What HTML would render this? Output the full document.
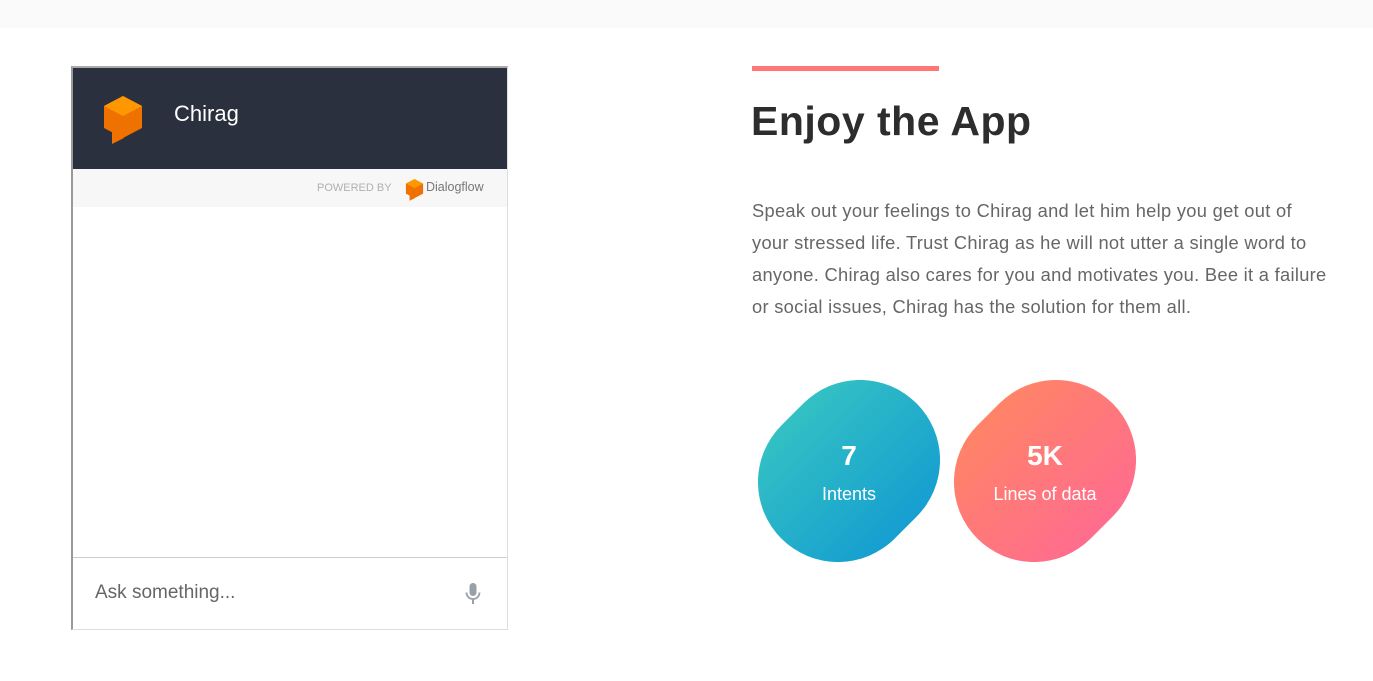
<!DOCTYPE html>
<html><head><style>
body{margin:0;width:1373px;height:681px;background:#fff;font-family:"Liberation Sans",sans-serif;position:relative;overflow:hidden}
.top{position:absolute;left:0;top:0;width:1373px;height:28px;background:#fafafa}
.chat{position:absolute;left:71px;top:66px;width:434px;height:561px;border:1px solid #ddd;border-left:2px solid #999;border-top:2px solid #aaa;background:#fff}
.hdr{position:absolute;left:0;top:0;width:434px;height:101px;background:#2b303e}
.hdr .name{position:absolute;left:101px;top:33px;color:#fff;font-size:22px}
.pw{position:absolute;left:0;top:101px;width:434px;height:38px;background:#f7f7f7}
.pw .t{position:absolute;left:244px;top:13px;font-size:11px;color:#b0b0b0}
.pw .d{position:absolute;left:353px;top:11px;font-size:12.5px;color:#777}
.inp{position:absolute;left:0;top:489px;width:434px;height:72px;border-top:1px solid #ccc}
.inp .t{position:absolute;left:22px;top:24px;font-size:19px;color:#666}
.bar{position:absolute;left:752px;top:66px;width:187px;height:5px;background:#ff7675}
h1{position:absolute;left:751px;top:98px;margin:0;font-size:41px;font-weight:bold;color:#2d2d2d;letter-spacing:0.5px}
p{position:absolute;left:752px;top:195px;margin:0;font-size:18.3px;line-height:32px;color:#666;letter-spacing:0.3px;white-space:nowrap}
</style></head><body>
<div class="top"></div>
<div class="chat">
 <div class="hdr">
  <svg style="position:absolute;left:29px;top:26px" width="42" height="50" viewBox="0 0 42 50">
   <polygon points="21,2 40,12 40,34 21,44 2,34 2,12" fill="#ef7100"/>
   <polygon points="21,2 40,12 21,22 2,12" fill="#ff9800"/>
   <polygon points="10,38 22,44 10,50" fill="#ef7100"/>
  </svg>
  <div class="name">Chirag</div>
 </div>
 <div class="pw"><span class="t">POWERED BY</span>
  <svg style="position:absolute;left:332px;top:9px" width="19" height="23" viewBox="0 0 42 50">
   <polygon points="21,2 40,12 40,34 21,44 2,34 2,12" fill="#ef7100"/>
   <polygon points="21,2 40,12 21,22 2,12" fill="#ff9800"/>
   <polygon points="10,38 22,44 10,50" fill="#ef7100"/>
  </svg>
  <span class="d">Dialogflow</span></div>
 <div class="inp"><span class="t">Ask something...</span>
  <svg style="position:absolute;left:391px;top:25px" width="18" height="22" viewBox="0 0 18 22">
   <rect x="5.5" y="0" width="7" height="13" rx="3.5" fill="#9aa0a8"/>
   <path d="M2.5 9.5a6.5 6.5 0 0 0 13 0" stroke="#9aa0a8" stroke-width="1.8" fill="none"/>
   <rect x="8" y="16" width="2" height="5" fill="#9aa0a8"/>
  </svg>
 </div>
</div>
<div class="bar"></div>
<h1>Enjoy the App</h1>
<p>Speak out your feelings to Chirag and let him help you get out of<br>your stressed life. Trust Chirag as he will not utter a single word to<br>anyone. Chirag also cares for you and motivates you. Bee it a failure<br>or social issues, Chirag has the solution for them all.</p>
<svg style="position:absolute;left:758px;top:380px" width="182" height="182">
 <defs>
  <linearGradient id="g1" x1="0" y1="0" x2="1" y2="1"><stop offset="0" stop-color="#3ccbc0"/><stop offset="1" stop-color="#0d94d4"/></linearGradient>
 </defs>
 <path d="M45.4 23.4 A80 80 0 0 1 158.6 136.6 L136.6 158.6 A80 80 0 0 1 23.4 45.4 Z" fill="url(#g1)"/>
 <text x="91" y="85" text-anchor="middle" fill="#fff" font-family="Liberation Sans" font-weight="bold" font-size="28">7</text>
 <text x="91" y="120" text-anchor="middle" fill="#fff" font-family="Liberation Sans" font-size="18">Intents</text>
</svg>
<svg style="position:absolute;left:954px;top:380px" width="182" height="182">
 <defs>
  <linearGradient id="g2" x1="0" y1="0" x2="1" y2="1"><stop offset="0" stop-color="#ff8a5c"/><stop offset="1" stop-color="#ff6699"/></linearGradient>
 </defs>
 <path d="M45.4 23.4 A80 80 0 0 1 158.6 136.6 L136.6 158.6 A80 80 0 0 1 23.4 45.4 Z" fill="url(#g2)"/>
 <text x="91" y="85" text-anchor="middle" fill="#fff" font-family="Liberation Sans" font-weight="bold" font-size="28">5K</text>
 <text x="91" y="120" text-anchor="middle" fill="#fff" font-family="Liberation Sans" font-size="18">Lines of data</text>
</svg>
</body></html>
